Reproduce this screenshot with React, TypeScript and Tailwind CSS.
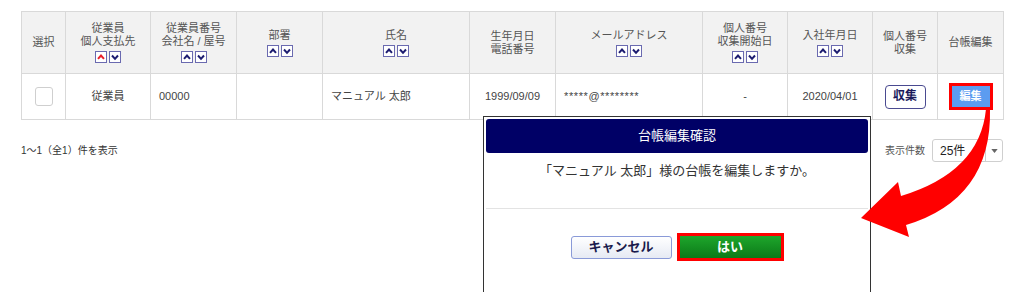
import React from 'react';

// ソートボタン（昇順・降順）
const SortButtons: React.FC<{ activeUp?: boolean }> = ({ activeUp }) => (
  <div className="mt-[3px] flex justify-center gap-[2px]">
    <span className="flex h-[12px] w-[12px] items-center justify-center border border-[#6a6ab0] bg-white">
      <svg viewBox="0 0 10 10" className="h-[10px] w-[10px]">
        <path d="M2 6.8 L5 3.5 L8 6.8" fill="none" stroke={activeUp ? '#e8202a' : '#1c1c70'} strokeWidth="2" />
      </svg>
    </span>
    <span className="flex h-[12px] w-[12px] items-center justify-center border border-[#6a6ab0] bg-white">
      <svg viewBox="0 0 10 10" className="h-[10px] w-[10px]">
        <path d="M2 3.5 L5 6.8 L8 3.5" fill="none" stroke="#1c1c70" strokeWidth="2" />
      </svg>
    </span>
  </div>
);

const th = 'border border-[#d9d9d9] bg-[#f2f2f2] text-center align-middle font-normal text-[11px] leading-[13px] text-[#555]';
const td = 'border border-[#d9d9d9] align-middle text-[11px] leading-[13px] text-[#444]';

const App: React.FC = () => {
  return (
    <div className="relative h-[292px] w-[1024px] overflow-hidden bg-white font-['Liberation_Sans','Noto_Sans_CJK_JP',sans-serif]">
      <div className="px-[21px] pt-[11px]">
        <table className="w-[982px] table-fixed border-collapse">
          <colgroup>
            <col className="w-[44px]" />
            <col className="w-[85px]" />
            <col className="w-[86px]" />
            <col className="w-[86px]" />
            <col className="w-[147px]" />
            <col className="w-[86px]" />
            <col className="w-[147px]" />
            <col className="w-[85px]" />
            <col className="w-[85px]" />
            <col className="w-[65px]" />
            <col className="w-[66px]" />
          </colgroup>
          <thead>
            <tr className="h-[62px]">
              <th className={th}>選択</th>
              <th className={th}>
                従業員<br />個人支払先
                <SortButtons activeUp />
              </th>
              <th className={th}>
                従業員番号<br />会社名 / 屋号
                <SortButtons />
              </th>
              <th className={th}>
                部署
                <SortButtons />
              </th>
              <th className={th}>
                氏名
                <SortButtons />
              </th>
              <th className={th}>
                生年月日<br />電話番号
              </th>
              <th className={th}>
                メールアドレス
                <SortButtons />
              </th>
              <th className={th}>
                個人番号<br />収集開始日
                <SortButtons />
              </th>
              <th className={th}>
                入社年月日
                <SortButtons />
              </th>
              <th className={th}>
                個人番号<br />収集
              </th>
              <th className={th}>台帳編集</th>
            </tr>
          </thead>
          <tbody>
            <tr className="h-[46px]">
              <td className={td}>
                <div className="mx-auto h-[19px] w-[18px] rounded-[3px] border border-[#cfcfcf] bg-white" />
              </td>
              <td className={`${td} text-center`}>従業員</td>
              <td className={`${td} pl-[8px]`}>00000</td>
              <td className={td}></td>
              <td className={`${td} pl-[8px]`}>マニュアル 太郎</td>
              <td className={`${td} text-center`}>1999/09/09</td>
              <td className={`${td} pl-[8px] tracking-[0.6px]`}>*****@********</td>
              <td className={`${td} text-center`}>-</td>
              <td className={`${td} text-center`}>2020/04/01</td>
              <td className={td}>
                <div className="mx-auto flex h-[24px] w-[41px] items-center justify-center rounded-[4px] border border-[#4a4a90] bg-white text-[12px] font-bold text-[#1a1a5c]">
                  収集
                </div>
              </td>
              <td className={td}>
                <div className="mx-auto w-[44px] border-[3px] border-[#ff0000]">
                  <div className="flex h-[21px] items-center justify-center bg-[#5c9cf0] text-[11px] font-bold text-white">
                    編集
                  </div>
                </div>
              </td>
            </tr>
          </tbody>
        </table>

        <div className="mt-[19px] flex items-center justify-between">
          <span className="text-[10px] text-[#333]">1〜1（全1）件を表示</span>
          <div className="flex items-center gap-[7px]">
            <span className="text-[10px] text-[#555]">表示件数</span>
            <div className="flex h-[23px] w-[71px] items-center rounded-[3px] border border-[#cfcfcf] bg-white">
              <span className="flex-1 pl-[7px] text-[12px] text-[#222]">25件</span>
              <span className="flex h-full w-[17px] items-center justify-center border-l border-[#cfcfcf]">
                <svg viewBox="0 0 8 5" className="h-[4px] w-[7px]">
                  <path d="M0 0 L8 0 L4 5 Z" fill="#666" />
                </svg>
              </span>
            </div>
          </div>
        </div>
      </div>

      {/* 確認ダイアログ */}
      <div className="absolute left-[483px] top-[116px] h-[200px] w-[388px] border border-[#333] bg-white px-[2px] pt-[2px]">
        <div className="flex h-[34px] items-center justify-center rounded-[3px] bg-[#000066] text-[13px] text-white">
          台帳編集確認
        </div>
        <div className="flex h-[36px] items-center justify-center text-[13px] text-[#333]">
          「マニュアル 太郎」様の台帳を編集しますか。
        </div>
        <div className="mt-[19px] border-t border-[#e3e3e3]" />
        <div className="mt-[24px] flex items-center justify-center gap-[5px]">
          <button className="h-[23px] w-[101px] rounded-[3px] border border-[#8a9ad8] bg-gradient-to-b from-white to-[#e6eaf4] text-[13px] font-bold text-[#1a1a4c]">
            キャンセル
          </button>
          <div className="border-[3px] border-[#ff0000]">
            <button className="flex h-[22px] w-[101px] items-center justify-center bg-gradient-to-b from-[#1ea62c] to-[#0b7a18] text-[13px] font-bold text-white">
              はい
            </button>
          </div>
        </div>
      </div>

      {/* 矢印 */}
      <svg className="pointer-events-none absolute left-0 top-0" width="1024" height="292" viewBox="0 0 1024 292">
        <path
          d="M986 109 Q980 172 901 196 L898 182 L861 218 L909 237 L906 225 Q992 199 990 109 Z"
          fill="#ff0000"
        />
      </svg>
    </div>
  );
};

export default App;
